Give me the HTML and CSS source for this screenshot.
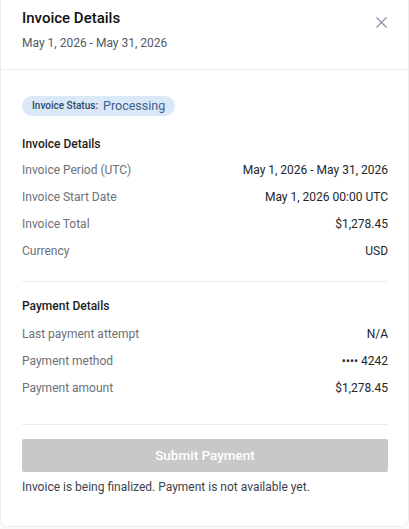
FILE: index.html
```html
<!DOCTYPE html>
<html lang="en">
<head>
  <meta charset="UTF-8" />
  <meta name="viewport" content="width=device-width, initial-scale=1.0"/>
  <title>Invoice Details</title>
  <link rel="stylesheet" href="styles.css">
</head>
<body>

  <div class="panel">
    <div class="panel-header">
      <div>
        <h2 class="title">Invoice Details</h2>
        <div class="subtitle">May 1, 2026 - May 31, 2026</div>
      </div>
      <button class="close-btn" aria-label="Close">
        <svg width="11" height="11" viewBox="0 0 11 11">
          <path d="M0.5 0.5 L10.5 10.5 M10.5 0.5 L0.5 10.5" stroke="#8c96a8" stroke-width="1.3" fill="none"/>
        </svg>
      </button>
    </div>

    <div class="panel-body">
      <span class="status-badge">
        <span class="status-label">Invoice Status:</span>
        <span class="status-value">Processing</span>
      </span>

      <div class="section">
        <h3 class="section-title">Invoice Details</h3>
        <div class="row"><span class="label">Invoice Period (UTC)</span><span class="value">May 1, 2026 - May 31, 2026</span></div>
        <div class="row"><span class="label">Invoice Start Date</span><span class="value">May 1, 2026 00:00 UTC</span></div>
        <div class="row"><span class="label">Invoice Total</span><span class="value">$1,278.45</span></div>
        <div class="row"><span class="label">Currency</span><span class="value">USD</span></div>
      </div>

      <hr class="divider first">

      <div class="section payment">
        <h3 class="section-title">Payment Details</h3>
        <div class="row"><span class="label">Last payment attempt</span><span class="value">N/A</span></div>
        <div class="row"><span class="label">Payment method</span><span class="value">&bull;&bull;&bull;&bull; 4242</span></div>
        <div class="row"><span class="label">Payment amount</span><span class="value">$1,278.45</span></div>
      </div>

      <hr class="divider">

      <button class="submit-btn" disabled>Submit Payment</button>
      <p class="note">Invoice is being finalized. Payment is not available yet.</p>
    </div>
  </div>

</body>
</html>
```

FILE: styles.css
```css
body {
  margin: 0;
  font-family: Roboto, 'Liberation Sans', sans-serif;
  background: #fafafa;
}

.panel {
  width: 407px;
  background: #fff;
  border: 1px solid #eeeeee;
  border-top: none;
  border-radius: 0 0 8px 8px;
}

.panel-header {
  display: flex;
  justify-content: space-between;
  align-items: flex-start;
  padding: 8px 21px 17px;
  border-bottom: 1px solid #ececec;
}

.title {
  margin: 0;
  font-size: 15px;
  line-height: 20px;
  font-weight: 500;
  color: #111;
}

.subtitle {
  margin-top: 6px;
  font-size: 12px;
  line-height: 18px;
  color: #525a66;
}

.close-btn {
  border: none;
  background: none;
  padding: 0;
  margin: 8px 0 0 0;
  cursor: pointer;
}

.panel-body {
  padding: 24px 20px 30px 21px;
}

.status-badge {
  display: inline-flex;
  align-items: center;
  height: 20px;
  padding: 0 10px;
  border-radius: 10px;
  background: #dbe8f7;
}

.status-label {
  font-size: 10px;
  font-weight: 500;
  color: #2f4a6b;
  margin-right: 5px;
}

.status-value {
  font-size: 12.5px;
  color: #3d5f8c;
}

.section-title {
  margin: 19px 0 4px;
  font-size: 12px;
  line-height: 18px;
  font-weight: 500;
  color: #1a1d22;
}

.payment .section-title {
  margin: 15px 0 6px;
}

.row {
  display: flex;
  justify-content: space-between;
  height: 27px;
  line-height: 27px;
  font-size: 12px;
}

.label {
  color: #6b7079;
}

.value {
  color: #22262c;
}

.divider {
  border: none;
  border-top: 1px solid #ececec;
  margin: 22px 0 0;
}

.divider.first {
  margin: 16px 0 0;
}

.submit-btn {
  display: block;
  width: 100%;
  height: 33px;
  margin-top: 14px;
  border: none;
  border-radius: 2px;
  background: #c8c8c8;
  color: #fff;
  font-family: inherit;
  font-size: 13.5px;
  font-weight: 500;
}

.note {
  margin: 6px 0 0;
  font-size: 12px;
  line-height: 18px;
  color: #3c424b;
}
```
